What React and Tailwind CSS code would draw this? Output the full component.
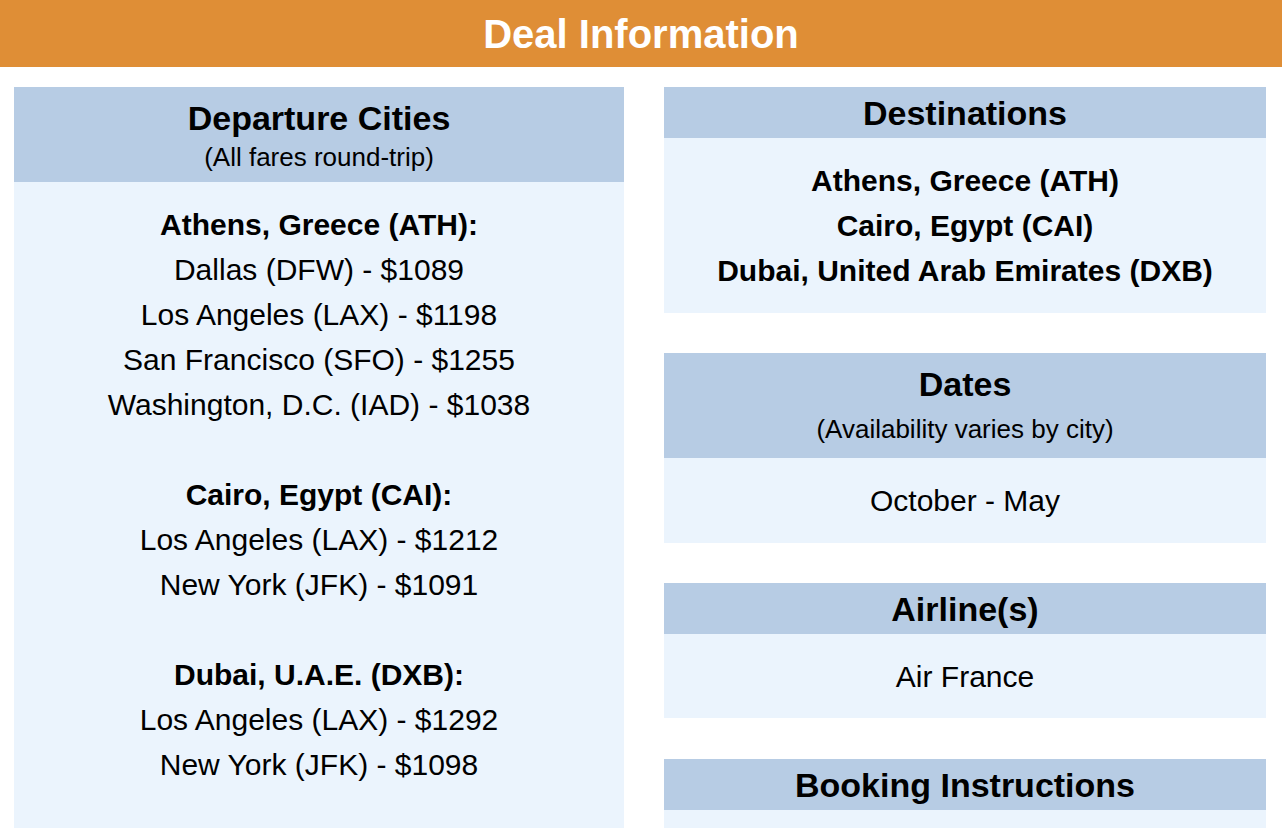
const departures = [
  {
    city: "Athens, Greece (ATH):",
    fares: [
      "Dallas (DFW) - $1089",
      "Los Angeles (LAX) - $1198",
      "San Francisco (SFO) - $1255",
      "Washington, D.C. (IAD) - $1038",
    ],
  },
  {
    city: "Cairo, Egypt (CAI):",
    fares: ["Los Angeles (LAX) - $1212", "New York (JFK) - $1091"],
  },
  {
    city: "Dubai, U.A.E. (DXB):",
    fares: ["Los Angeles (LAX) - $1292", "New York (JFK) - $1098"],
  },
];

function BoxHeader({ title, subtitle, tall }) {
  if (!subtitle) {
    return (
      <div className="h-[51px] bg-[#b7cce4] flex items-center justify-center">
        <h2 className="text-[34px] leading-[36px] font-bold">{title}</h2>
      </div>
    );
  }
  return (
    <div
      className={`bg-[#b7cce4] flex flex-col items-center pt-[13px] ${
        tall ? "pb-[14px]" : "pb-[10px]"
      }`}
    >
      <h2 className="text-[34px] leading-[36px] font-bold">{title}</h2>
      <p
        className={`text-[26px] leading-[30px] ${
          tall ? "mt-[12px]" : "mt-[6px]"
        }`}
      >
        {subtitle}
      </p>
    </div>
  );
}

export default function App() {
  return (
    <div
      className="w-[1282px] h-[828px] overflow-hidden bg-white text-black"
      style={{ fontFamily: '"Liberation Sans", Arial, sans-serif' }}
    >
      {/* Title bar */}
      <header className="h-[67px] bg-[#df8e36] flex items-center justify-center">
        <h1 className="text-white text-[40px] leading-none font-bold">
          Deal Information
        </h1>
      </header>

      <div className="flex gap-[40px] pl-[14px] pr-[16px] pt-[20px]">
        {/* Departure cities */}
        <section className="w-[610px] shrink-0">
          <BoxHeader title="Departure Cities" subtitle="(All fares round-trip)" />
          <div className="bg-[#ebf4fd] pt-[20px] pb-[80px] text-center text-[30px] leading-[45px]">
            {departures.map((d, i) => (
              <div key={d.city} className={i > 0 ? "mt-[45px]" : ""}>
                <p className="font-bold">{d.city}</p>
                {d.fares.map((f) => (
                  <p key={f}>{f}</p>
                ))}
              </div>
            ))}
          </div>
        </section>

        {/* Right column */}
        <div className="flex-1 flex flex-col gap-[40px]">
          <section>
            <BoxHeader title="Destinations" />
            <div className="bg-[#ebf4fd] py-[20px] text-center text-[30px] leading-[45px] font-bold">
              <p>Athens, Greece (ATH)</p>
              <p>Cairo, Egypt (CAI)</p>
              <p>Dubai, United Arab Emirates (DXB)</p>
            </div>
          </section>

          <section>
            <BoxHeader
              title="Dates"
              subtitle="(Availability varies by city)"
              tall
            />
            <div className="bg-[#ebf4fd] py-[20px] text-center text-[30px] leading-[45px]">
              <p>October - May</p>
            </div>
          </section>

          <section>
            <BoxHeader title="Airline(s)" />
            <div className="bg-[#ebf4fd] h-[84px] flex items-center justify-center text-[30px] leading-[45px]">
              <p>Air France</p>
            </div>
          </section>

          <section className="mt-px">
            <BoxHeader title="Booking Instructions" />
            <div className="bg-[#ebf4fd] h-[60px]" />
          </section>
        </div>
      </div>
    </div>
  );
}
